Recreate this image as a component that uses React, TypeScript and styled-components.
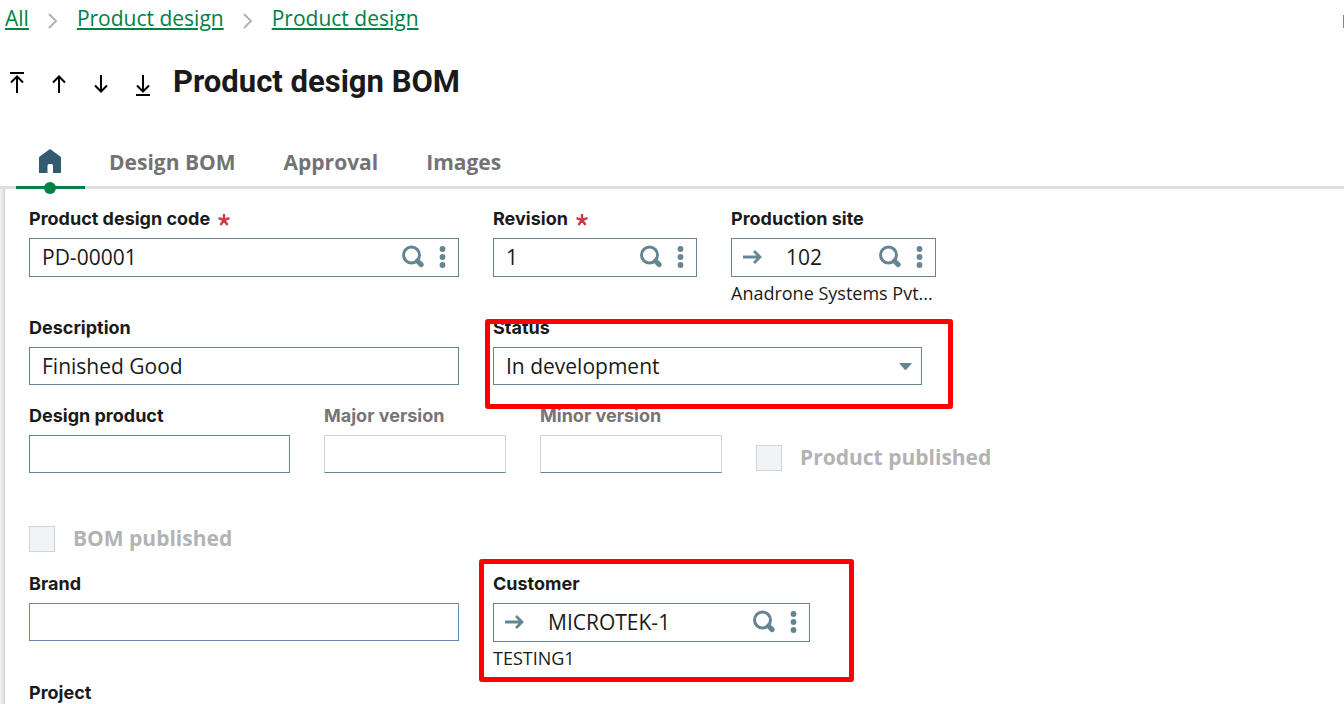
import React from "react";
import styled, { createGlobalStyle } from "styled-components";

const slate = "#668592";
const green = "#008146";
const ink = "#1a1a1a";

const GlobalStyle = createGlobalStyle`
  *, *::before, *::after { box-sizing: border-box; }
  body {
    margin: 0;
    background: #fff;
    color: ${ink};
    font-family: "Open Sans", "Noto Sans", sans-serif;
    overflow-x: hidden;
  }
  #root { height: 100vh; overflow: hidden; }
  button, input, select { font: inherit; color: inherit; }
`;

const Page = styled.div`
  display: flex;
  flex-direction: column;
  min-height: 100%;
`;

const Breadcrumbs = styled.nav`
  display: flex;
  align-items: center;
  height: 36px;
  padding-left: 5px;
`;

const Crumb = styled.a`
  color: ${green};
  font-size: 21px;
  line-height: 28px;
  text-decoration: underline;
  text-decoration-thickness: 2px;
  text-underline-offset: 2px;
`;

const CrumbArrow = styled.svg`
  width: 48px;
  height: 20px;
  margin-top: 6px;
  fill: none;
  stroke: #b3b3b3;
  stroke-width: 2;
`;

const EdgeMark = styled.span`
  width: 1px;
  height: 13px;
  margin: 7px 0 0 auto;
  background: #a4786a;
`;

const Header = styled.header`
  display: flex;
  align-items: center;
  height: 92px;
  margin-bottom: 10px;
  padding-left: 5px;
`;

const NavButtons = styled.div`
  display: flex;
  gap: 18px;
  margin-right: 18px;
  padding-top: 4px;
`;

const IconButton = styled.button<{ $width: number }>`
  display: flex;
  flex: none;
  align-items: center;
  justify-content: center;
  width: ${(p) => p.$width}px;
  height: 28px;
  padding: 0;
  border: 0;
  background: none;
  cursor: pointer;
`;

const Title = styled.h1`
  margin: 0;
  font-family: Roboto, sans-serif;
  font-size: 31px;
  line-height: 36px;
  font-weight: 700;
`;

const Tabs = styled.div`
  display: flex;
  height: 51px;
  padding-left: 16px;
  border-bottom: 3px solid #d9e0e4;
`;

const Tab = styled.button<{ $active?: boolean }>`
  position: relative;
  display: flex;
  align-items: center;
  height: 51px;
  padding: ${(p) => (p.$active ? "0 24px 2px 22px" : "0 24px")};
  border: 0;
  border-bottom: 3px solid ${(p) => (p.$active ? green : "transparent")};
  background: none;
  color: #737373;
  font-size: 21px;
  line-height: 28px;
  font-weight: 700;
  cursor: pointer;
`;

const TabDot = styled.span`
  position: absolute;
  left: 50%;
  bottom: -8px;
  width: 12px;
  height: 12px;
  margin-left: -7px;
  border-radius: 50%;
  background: ${green};
`;

const Body = styled.main`
  display: flex;
  flex: 1;
`;

const Rail = styled.div`
  width: 5px;
  flex: none;
  background: linear-gradient(to right, #eef1f2, #e4e8ea 60%, #c4cbcf);
`;

const Form = styled.form`
  flex: 1;
  padding: 18px 24px 0;
`;

const Row = styled.div<{ $after: number }>`
  display: flex;
  align-items: flex-start;
  gap: 34px;
  margin-bottom: ${(p) => p.$after}px;
`;

const FieldBox = styled.div<{ $width: number }>`
  position: relative;
  display: flex;
  flex-direction: column;
  width: ${(p) => p.$width}px;
`;

const Label = styled.label<{ $disabled?: boolean }>`
  margin-bottom: 7px;
  color: ${(p) => (p.$disabled ? "#757575" : ink)};
  font-family: Inter, sans-serif;
  font-size: 18px;
  line-height: 24px;
  font-weight: 700;
  white-space: nowrap;
`;

const Star = styled.svg`
  width: 12px;
  height: 12px;
  margin-left: 8px;
  vertical-align: -1px;
  stroke: #cd384b;
`;

const Control = styled.div<{ $tall?: boolean; $disabled?: boolean; $tint?: string }>`
  position: relative;
  display: flex;
  align-items: center;
  height: ${(p) => (p.$tall ? 39 : 38)}px;
  border: 1px solid ${(p) => (p.$disabled ? "#ccd6db" : p.$tint || slate)};
  border-bottom-color: ${(p) => p.$tint || slate};
  background: #fff;
`;

const TextInput = styled.input`
  flex: 1;
  min-width: 0;
  height: 36px;
  align-self: flex-start;
  padding: 0 12px;
  border: 0;
  outline: 0;
  background: transparent;
  font-size: 21px;
`;

const Actions = styled.div`
  display: flex;
  gap: 8px;
  padding: 0 7px 2px 0;
`;

const Jump = styled.div`
  display: flex;
  padding: 0 0 1px 8px;
  margin-right: 8px;
`;

const Select = styled.select`
  width: 100%;
  height: 100%;
  padding: 0 40px 0 12px;
  border: 0;
  outline: 0;
  appearance: none;
  background: transparent;
  font-size: 21px;
`;

const Caret = styled.svg`
  position: absolute;
  right: 9px;
  width: 13px;
  height: 7px;
  fill: ${slate};
  pointer-events: none;
`;

const Helper = styled.div`
  margin-top: 4px;
  padding-bottom: 2px;
  font-size: 18px;
  line-height: 24px;
  white-space: nowrap;
`;

const Check = styled.label<{ $above: number }>`
  display: flex;
  align-items: flex-start;
  gap: 18px;
  height: ${(p) => p.$above + 26}px;
  padding-top: ${(p) => p.$above}px;
  color: #b3b3b3;
  font-size: 21px;
  line-height: 24px;
  font-weight: 700;
`;

const CheckBox = styled.input`
  width: 26px;
  height: 26px;
  margin: 0;
  appearance: none;
  border: 1px solid #ccd6db;
  background: #f0f4f6;
`;

const StatusMark = styled.div`
  position: absolute;
  z-index: 1;
  inset: 3px -31px -24px -8px;
  border: 5px solid #f00;
  border-radius: 3px;
  pointer-events: none;
`;

const CustomerMark = styled(StatusMark)`
  inset: -13px -44px -10px -14px;
`;

const navPaths = [
  { label: "First record", d: "M5 3H19M12 23V6M6 12.5L12 6.5L18 12.5" },
  { label: "Previous record", d: "M12 23V6M6 12.5L12 6.5L18 12.5" },
  { label: "Next record", d: "M12 5V22M6 15.5L12 21.5L18 15.5" },
  { label: "Last record", d: "M12 5V22M6 15.5L12 21.5L18 15.5M5 25H19" },
];

function SearchIcon() {
  return (
    <svg width="23" height="23" viewBox="0 0 23 23" fill="none" stroke={slate} aria-hidden="true">
      <circle cx="9.5" cy="10" r="8" strokeWidth="3" />
      <path d="M15.5 16L19.2 19.6" strokeWidth="5" strokeLinecap="round" />
    </svg>
  );
}

function DotsIcon() {
  return (
    <svg width="8" height="22" viewBox="0 0 8 22" fill={slate} aria-hidden="true">
      <circle cx="4.5" cy="3" r="2.9" />
      <circle cx="4.5" cy="11" r="2.9" />
      <circle cx="4.5" cy="19" r="2.9" />
    </svg>
  );
}

function LookupActions() {
  return (
    <Actions>
      <IconButton type="button" $width={24} aria-label="Search"><SearchIcon /></IconButton>
      <IconButton type="button" $width={18} aria-label="More"><DotsIcon /></IconButton>
    </Actions>
  );
}

function RequiredStar() {
  return (
    <Star viewBox="0 0 12 12" aria-label="required">
      <path d="M6 6V0M6 6L0.5 4.2M6 6L11.5 4.2M6 6L2.5 11M6 6L9.5 11" strokeWidth="2.4" />
    </Star>
  );
}

type FieldProps = {
  id: string;
  label: string;
  width: number;
  value?: string;
  required?: boolean;
  disabled?: boolean;
  lookup?: boolean;
  jump?: boolean;
  tint?: string;
  helper?: string;
  children?: React.ReactNode;
};

function Field({ id, label, width, value = "", required, disabled, lookup, jump, tint, helper, children }: FieldProps) {
  return (
    <FieldBox $width={width}>
      <Label htmlFor={id} $disabled={disabled}>
        {label}
        {required && <RequiredStar />}
      </Label>
      <Control $tall={lookup} $disabled={disabled} $tint={tint}>
        {jump && (
          <Jump>
            <IconButton type="button" $width={26} aria-label="Open record">
              <svg width="20" height="16" viewBox="0 0 20 16" fill="none" stroke={slate} strokeWidth="2.8">
                <path d="M0 8H17M11 2L17 8L11 14" />
              </svg>
            </IconButton>
          </Jump>
        )}
        <TextInput id={id} type="text" defaultValue={value} disabled={disabled} />
        {lookup && <LookupActions />}
      </Control>
      {helper && <Helper>{helper}</Helper>}
      {children}
    </FieldBox>
  );
}

function Separator() {
  return (
    <CrumbArrow viewBox="0 0 48 20" aria-hidden="true">
      <path d="M20 3L27 10L20 17" />
    </CrumbArrow>
  );
}

export default function App() {
  return (
    <>
      <GlobalStyle />
      <Page>
        <Breadcrumbs aria-label="Breadcrumb">
          <Crumb href="#all">All</Crumb>
          <Separator />
          <Crumb href="#product-design">Product design</Crumb>
          <Separator />
          <Crumb href="#current">Product design</Crumb>
          <EdgeMark />
        </Breadcrumbs>

        <Header>
          <NavButtons>
            {navPaths.map((n) => (
              <IconButton key={n.label} type="button" $width={24} aria-label={n.label}>
                <svg width="24" height="28" viewBox="0 0 24 28" fill="none" stroke="#000" strokeWidth="2">
                  <path d={n.d} />
                </svg>
              </IconButton>
            ))}
          </NavButtons>
          <Title>Product design BOM</Title>
        </Header>

        <Tabs role="tablist">
          <Tab role="tab" aria-selected="true" aria-label="Home" $active>
            <svg width="23" height="25" viewBox="0 0 23 25" fill="#335b70">
              <path d="M12 0L22 7.2Q23 8 23 9V24H15V17Q15 15 13.500 15H11Q9.500 15 9.500 17V24H1V9Q1 8 2 7.200Z" />
            </svg>
            <TabDot />
          </Tab>
          <Tab role="tab" aria-selected="false">Design BOM</Tab>
          <Tab role="tab" aria-selected="false">Approval</Tab>
          <Tab role="tab" aria-selected="false">Images</Tab>
        </Tabs>

        <Body>
          <Rail />
          <Form>
            <Row $after={9}>
              <Field id="code" label="Product design code" width={430} value="PD-00001" required lookup />
              <Field id="revision" label="Revision" width={204} value="1" required lookup />
              <Field id="site" label="Production site" width={205} value="102" lookup jump helper="Anadrone Systems Pvt..." />
            </Row>
            <Row $after={19}>
              <Field id="description" label="Description" width={430} value="Finished Good" />
              <FieldBox $width={429}>
                <Label htmlFor="status">Status</Label>
                <Control>
                  <Select id="status" defaultValue="dev">
                    <option value="dev">In development</option>
                  </Select>
                  <Caret viewBox="0 0 13 7" aria-hidden="true">
                    <path d="M0 0H13L7.5 6.5Q6.5 7.4 5.5 6.5Z" />
                  </Caret>
                </Control>
                <StatusMark />
              </FieldBox>
            </Row>
            <Row $after={18}>
              <Field id="product" label="Design product" width={261} />
              <Field id="major" label="Major version" width={182} disabled />
              <Field id="minor" label="Minor version" width={182} disabled />
              <Check $above={41}>
                <CheckBox type="checkbox" disabled />
                Product published
              </Check>
            </Row>
            <Row $after={20}>
              <Check $above={35}>
                <CheckBox type="checkbox" disabled />
                BOM published
              </Check>
            </Row>
            <Row $after={9}>
              <Field id="brand" label="Brand" width={430} tint="#668cb2" />
              <Field id="customer" label="Customer" width={317} value="MICROTEK-1" lookup jump helper="TESTING1">
                <CustomerMark />
              </Field>
            </Row>
            <Row $after={18}>
              <Field id="project" label="Project" width={430} />
            </Row>
          </Form>
        </Body>
      </Page>
    </>
  );
}
